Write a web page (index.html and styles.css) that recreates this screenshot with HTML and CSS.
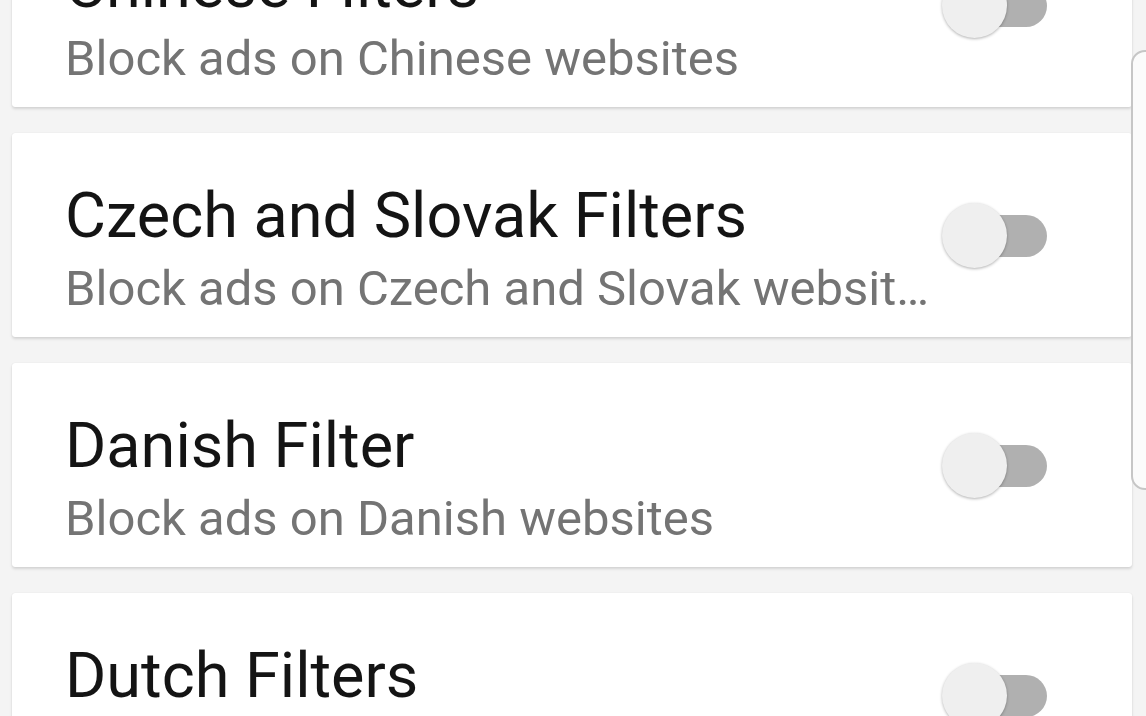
FILE: index.html
```html
<!DOCTYPE html>
<html lang="en">
<head>
    <meta charset="UTF-8">
    <meta name="viewport" content="width=device-width, initial-scale=1.0">
    <title>Filters</title>
    <link rel="stylesheet" href="styles.css">
</head>
<body>
    <div class="list">
        <div class="card">
            <div class="text">
                <div class="title">Chinese Filters</div>
                <div class="summary">Block ads on Chinese websites</div>
            </div>
            <div class="toggle"><span class="track"></span><span class="thumb"></span></div>
        </div>
        <div class="card">
            <div class="text">
                <div class="title">Czech and Slovak Filters</div>
                <div class="summary">Block ads on Czech and Slovak websites</div>
            </div>
            <div class="toggle"><span class="track"></span><span class="thumb"></span></div>
        </div>
        <div class="card">
            <div class="text">
                <div class="title">Danish Filter</div>
                <div class="summary">Block ads on Danish websites</div>
            </div>
            <div class="toggle"><span class="track"></span><span class="thumb"></span></div>
        </div>
        <div class="card">
            <div class="text">
                <div class="title">Dutch Filters</div>
                <div class="summary">Block ads on Dutch websites</div>
            </div>
            <div class="toggle"><span class="track"></span><span class="thumb"></span></div>
        </div>
    </div>
    <div class="scroll-thumb"></div>
</body>
</html>
```

FILE: styles.css
```css
html, body {
    margin: 0;
    padding: 0;
    height: 100%;
    overflow: hidden;
}
body {
    font-family: Roboto, "Noto Sans", sans-serif;
    background-color: #f4f4f4;
    position: relative;
}
.list {
    display: flex;
    flex-direction: column;
    gap: 26px;
    margin-top: -97px;
    padding: 0 14px 0 12px;
}
.card {
    display: flex;
    align-items: center;
    height: 204px;
    box-sizing: border-box;
    padding: 0 85px 0 53px;
    background-color: #ffffff;
    border-radius: 3px;
    box-shadow: 0 2px 3px rgba(0, 0, 0, 0.13), 0 0 1px rgba(0, 0, 0, 0.12);
}
.text {
    flex: 1;
    min-width: 0;
    align-self: flex-start;
    padding-top: 47px;
}
.title {
    font-size: 63px;
    line-height: 72px;
    color: #141414;
    white-space: nowrap;
}
.summary {
    font-size: 49px;
    line-height: 58px;
    margin-top: 8px;
    color: #747474;
    white-space: nowrap;
    overflow: hidden;
    text-overflow: ellipsis;
}
.toggle {
    position: relative;
    flex: none;
    width: 105px;
    height: 65px;
    margin-left: 12px;
}
.track {
    position: absolute;
    left: 12px;
    right: 0;
    top: 12px;
    height: 42px;
    border-radius: 21px;
    background-color: #b0b0b0;
}
.thumb {
    position: absolute;
    left: 0;
    top: 0;
    width: 65px;
    height: 65px;
    border-radius: 50%;
    background-color: #efefef;
    box-shadow: 0 1px 3px rgba(0, 0, 0, 0.3);
}
.scroll-thumb {
    position: absolute;
    left: 1131px;
    top: 50px;
    width: 40px;
    height: 440px;
    box-sizing: border-box;
    border: 2px solid #c6c6c6;
    border-radius: 14px;
    background-color: #fbfbfb;
}
```
